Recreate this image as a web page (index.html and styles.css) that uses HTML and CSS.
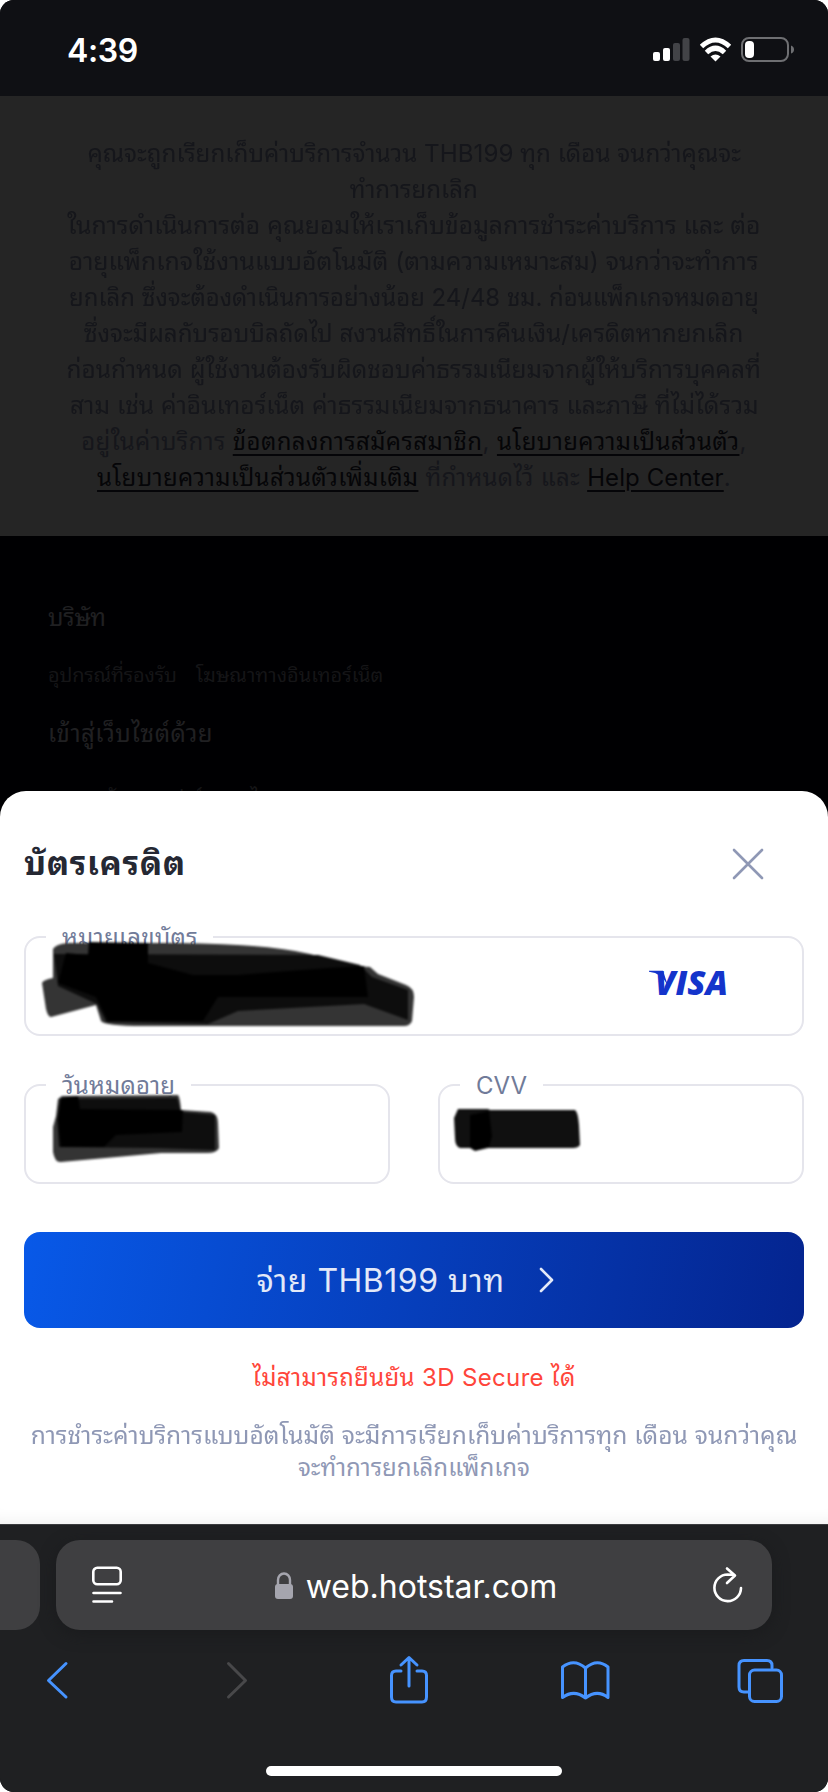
FILE: index.html
```html
<!DOCTYPE html>
<html lang="th">
<head>
<meta charset="utf-8">
<title>web.hotstar.com</title>
<link rel="stylesheet" href="styles.css">
</head>
<body>
<div class="phone">
  <header class="status">
    <span class="time">4:39</span>
    <svg class="status-icons" width="144" height="28" viewBox="0 0 144 28">
      <rect x="1" y="15" width="7" height="9" rx="2" fill="#fff"/>
      <rect x="11" y="11" width="7" height="13" rx="2" fill="#fff"/>
      <rect x="21" y="6" width="7" height="18" rx="2" fill="#424347"/>
      <rect x="30.500" y="1" width="7" height="23" rx="2" fill="#424347"/>
      <g fill="none" stroke="#fff" stroke-width="5"><path d="M49.500 9.500Q63.500-3.500 77.500 9.500"/><path d="M54.500 15.500Q63.500 7 72.500 15.500"/></g>
      <path d="M58.500 19.500Q63.500 15.500 68.500 19.500L63.500 24.500Z" fill="#fff"/>
      <rect x="90" y="1" width="46" height="23" rx="7" fill="none" stroke="#6e6f72" stroke-width="2"/>
      <rect x="93" y="4" width="9" height="17" rx="4" fill="#fff"/>
      <path d="M139 8.500q3 1 3 4t-3 4z" fill="#6e6f72"/>
    </svg>
  </header>
  <section class="terms">
    <p class="line l1">คุณจะถูกเรียกเก็บค่าบริการจำนวน THB199 ทุก เดือน จนกว่าคุณจะ</p>
    <p class="line l2">ทำการยกเลิก</p>
    <p class="line l3">ในการดำเนินการต่อ คุณยอมให้เราเก็บข้อมูลการชำระค่าบริการ และ ต่อ</p>
    <p class="line l4">อายุแพ็กเกจใช้งานแบบอัตโนมัติ (ตามความเหมาะสม) จนกว่าจะทำการ</p>
    <p class="line l5">ยกเลิก ซึ่งจะต้องดำเนินการอย่างน้อย 24/48 ชม. ก่อนแพ็กเกจหมดอายุ</p>
    <p class="line l6">ซึ่งจะมีผลกับรอบบิลถัดไป สงวนสิทธิ์ในการคืนเงิน/เครดิตหากยกเลิก</p>
    <p class="line l7">ก่อนกำหนด ผู้ใช้งานต้องรับผิดชอบค่าธรรมเนียมจากผู้ให้บริการบุคคลที่</p>
    <p class="line l8">สาม เช่น ค่าอินเทอร์เน็ต ค่าธรรมเนียมจากธนาคาร และภาษี ที่ไม่ได้รวม</p>
    <p class="line l9">อยู่ในค่าบริการ <a>ข้อตกลงการสมัครสมาชิก</a>, <a>นโยบายความเป็นส่วนตัว</a>,</p>
    <p class="line l10"><a>นโยบายความเป็นส่วนตัวเพิ่มเติม</a> ที่กำหนดไว้ และ <a class="latin">Help Center</a>.</p>
  </section>
  <section class="footer">
    <h3 class="foot-title">บริษัท</h3>
    <div class="foot-links"><span class="f1">อุปกรณ์ที่รองรับ</span><span class="f2">โฆษณาทางอินเทอร์เน็ต</span></div>
    <h3 class="foot-title second">เข้าสู่เว็บไซต์ด้วย</h3>
    <div class="foot-langs">ภาษาอังกฤษ ฟาร์ ภาษาไทย</div>
  </section>
  <main class="sheet">
    <div class="sheet-head">
      <h1 class="title">บัตรเครดิต</h1>
      <svg width="32" height="32" viewBox="0 0 32 32"><path d="M2 2L30 30M30 2L2 30" stroke="#8f98b5" stroke-width="2.600" stroke-linecap="round"/></svg>
    </div>
    <div class="fields">
      <div class="field wide">
        <span class="label lcard">หมายเลขบัตร</span>
        <svg class="visa" width="84" height="48" viewBox="0 -10 84 48"><path d="M0 1.800H14L19 17Q13 4 0 2.800Z" fill="#1434cb"/><text x="6" y="26" textLength="73" lengthAdjust="spacingAndGlyphs">VISA</text></svg>
        <svg class="scribble s1" width="380" height="100" viewBox="0 0 380 100">
          <path d="M15 12Q18 7 30 6L140 6Q230 7 272 17L318 29L332 30L340 37L368 48Q376 51 376 60L374 84Q372 89 366 89L105 89Q67 89 63 84L58 68L13 80Q10 80 8 72L4 46Q5 43 15 41Z" fill="#343434"/>
          <path d="M16 17L280 18L322 28L334 40L370 53V83L326 67L200 74L170 87L68 85L59 67L20 49Z" fill="#0d0d0d"/>
          <path d="M51 5L110 6V26L155 38H200L290 31L326 29L330 60L180 60L165 84H70L58 60L20 46L28 16L50 18Z" fill="#000"/>
        </svg>
      </div>
      <div class="row">
        <div class="field">
          <span class="label lexp">วันหมดอายุ</span>
          <svg class="scribble s2" width="200" height="90" viewBox="0 0 200 90">
            <path d="M26 10L142 9Q144 11 145 24L175 26Q182 28 182 37L183 62Q181 67 171 67L125 67L25 76Q19 77 17 66L17 41L20 30L22 13Z" fill="#343434"/>
            <path d="M24 13L141 12L145 26L179 29V64L120 62L23 61L21 33Z" fill="#0e0e0e"/>
            <path d="M25 12L42 10L44 23L147 24L146 46L80 49L68 61L25 61L22 34Z" fill="#000"/>
          </svg>
        </div>
        <div class="field">
          <span class="label lcvv">CVV</span>
          <svg class="scribble s3" width="150" height="70" viewBox="0 0 150 70">
            <path d="M18 13L48 13L50 14L135 14Q138 16 139 29L140 49Q138 52 133 52L48 52L35 55L30 52L20 52Q15 50 15 42L14 22Z" fill="#101010"/>
            <path d="M30 19L49 15L52 40L49 51L35 54L30 50Z" fill="#000"/>
          </svg>
        </div>
      </div>
    </div>
    <div class="pay"><span class="pay-text">จ่าย THB199 บาท</span><svg width="16" height="28" viewBox="0 0 16 28"><path d="M2 3L13 14L2 25" fill="none" stroke="#e3e9f8" stroke-width="2.600" stroke-linecap="round" stroke-linejoin="round"/></svg></div>
    <p class="error">ไม่สามารถยืนยัน 3D Secure ได้</p>
    <p class="note n1">การชำระค่าบริการแบบอัตโนมัติ จะมีการเรียกเก็บค่าบริการทุก เดือน จนกว่าคุณ</p>
    <p class="note n2">จะทำการยกเลิกแพ็กเกจ</p>
  </main>
  <footer class="browser">
    <div class="tabs">
      <div class="prev-tab"></div>
      <div class="url">
        <svg width="32" height="38" viewBox="0 0 32 38" fill="none" stroke="#fff" stroke-width="2.600" stroke-linecap="round"><rect x="1.300" y="1.800" width="27.400" height="16.400" rx="4"/><path d="M1.500 27H28.500M1.500 35.500H20"/></svg>
        <div class="address">
          <svg width="20" height="28" viewBox="0 0 20 28"><path d="M4 13V8a6 6.500 0 0 1 12 0v5" fill="none" stroke="#a5a5ae" stroke-width="2.400"/><rect x="1" y="12" width="18" height="15" rx="3" fill="#a5a5ae"/></svg>
          <span class="host">web.hotstar.com</span>
        </div>
        <svg width="32" height="38" viewBox="0 0 32 38" fill="none" stroke="#fff" stroke-width="2.600" stroke-linecap="round" stroke-linejoin="round"><path d="M29 22A13.300 13.300 0 1 1 15.700 8.500L22.500 9M15 2.500L23 9.500L15 17"/></svg>
      </div>
    </div>
    <nav class="tools">
      <svg width="50" height="50" viewBox="0 0 50 50"><path d="M20 8.500L2.500 25.500L20 42" class="ic"/></svg>
      <svg width="50" height="50" viewBox="0 0 50 50"><path d="M2.500 8.500L19.500 25.500L2.500 42" class="ic off"/></svg>
      <svg width="50" height="50" viewBox="0 0 50 50"><path d="M12 16H7Q2.500 16 2.500 20.500V42Q2.500 47 7 47H33Q37.500 47 37.500 42V20.500Q37.500 16 33 16H28M20 31V3M12 10L20 2.500L28 10" class="ic"/></svg>
      <svg width="50" height="50" viewBox="0 0 50 50"><path d="M25.500 43V13Q14 3 2.500 12V42.500Q14 34 25.500 43Q37 34 48 42.500V12Q37 3 25.500 13" class="ic"/></svg>
      <svg width="50" height="50" viewBox="0 0 50 50"><path d="M36 13V10.500Q36 5.500 31 5.500H8Q3 5.500 3 10.500V32Q3 37 8 37H13" class="ic"/><rect x="13.500" y="15" width="32" height="31.500" rx="5" class="ic"/></svg>
    </nav>
    <div class="home"></div>
  </footer>
</div>
</body>
</html>
```
FILE: styles.css
```css
* { box-sizing: border-box; }
body { margin: 0; background: #fff; font-family: Inter, "Noto Sans Thai Looped", "Noto Sans Thai", "Noto Sans", sans-serif; }
p, h1, h3 { margin: 0; font-weight: 400; }
svg { display: block; flex: none; }
.phone { width: 828px; height: 1792px; display: flex; flex-direction: column; border-radius: 14px; overflow: hidden; background: #000002; position: relative; }
.status { height: 96px; flex: none; background: #0f1014; display: flex; justify-content: space-between; align-items: center; padding: 5px 32px 0 67px; }
.time { color: #fff; font-size: 32px; font-weight: 600; letter-spacing: -0.4px; }
.terms { height: 440px; flex: none; background: #252525; color: #15161b; padding-top: 40px; display: flex; flex-direction: column; align-items: center; }
.line { height: 36px; line-height: 36px; font-size: 24px; white-space: nowrap; }
.l1 { transform: scaleX(1.008); }
.l2 { transform: scaleX(1.005); }
.l3 { transform: scaleX(1.032); }
.l4 { transform: scaleX(1.034); }
.l5 { transform: scaleX(0.997); }
.l6 { transform: scaleX(1.007); }
.l7 { transform: scaleX(1.016); }
.l8 { transform: scaleX(1.024); }
.l9 { letter-spacing: 0.4px; }
.l10 { letter-spacing: 0.32px; }
.line a { color: #050508; text-decoration: underline; text-decoration-thickness: 2px; text-underline-offset: 4px; }
.line .latin { letter-spacing: 0.1px; }
.footer { height: 255px; flex: none; padding: 62px 48px 0; color: #1c1c1f; overflow: hidden; white-space: nowrap; }
.foot-title { height: 40px; line-height: 40px; font-size: 24px; color: #202022; letter-spacing: -0.3px; }
.foot-links { margin-top: 19px; height: 36px; line-height: 36px; font-size: 20px; color: #151517; display: flex; gap: 19px; }
.f1 { letter-spacing: -0.2px; }
.foot-title.second { margin-top: 21px; letter-spacing: 0.5px; }
.foot-langs { margin-top: 25px; padding-left: 14px; height: 36px; line-height: 36px; font-size: 20px; color: #151517; }
.sheet { height: 733px; flex: none; background: #fff; border-radius: 26px 26px 0 0; padding: 47px 24px 0; box-shadow: inset 0 -16px 16px -14px #eee; }
.sheet-head { display: flex; justify-content: space-between; align-items: center; height: 52px; padding-right: 40px; }
.title { font-size: 33px; font-weight: 700; color: #252833; white-space: nowrap; letter-spacing: 0.7px; margin-top: -7px; }
.fields { margin-top: 46px; display: flex; flex-direction: column; gap: 48px; }
.row { display: grid; grid-template-columns: 366px 366px; gap: 48px; }
.field { height: 100px; border: 2px solid #e5e5ec; border-radius: 16px; position: relative; }
.label { position: absolute; left: 20px; top: -16px; height: 32px; line-height: 32px; padding: 0 16px; background: #fff; color: #717b99; font-size: 24px; white-space: nowrap; }
.lcard { width: 167px; letter-spacing: 0.25px; }
.lexp { width: 145px; letter-spacing: 0.2px; }
.lcvv { width: 83px; }
.visa { position: absolute; right: 69px; top: 21px; }
.visa text { font: italic 800 34px "Open Sans", sans-serif; fill: #1434cb; }
.scribble { position: absolute; filter: blur(1.200px); overflow: visible; }
.s1 { left: 12px; top: -1px; }
.s2 { left: 10px; top: 0; }
.s3 { left: 0; top: 10px; }
.pay { margin-top: 48px; height: 96px; border-radius: 16px; background: linear-gradient(100deg, #0859e8, #04248f); color: #e3e9f8; display: flex; align-items: center; justify-content: center; gap: 34px; padding: 0 17px 0 0; }
.pay-text { font-size: 32px; white-space: nowrap; letter-spacing: 0.5px; margin-top: -5px; }
.error { margin-top: 33px; height: 34px; line-height: 34px; font-size: 24px; color: #ff453a; text-align: center; white-space: nowrap; letter-spacing: 0.35px; }
.note { height: 32px; line-height: 32px; font-size: 24px; color: #8f98b5; white-space: nowrap; display: flex; justify-content: center; }
.n1 { margin-top: 25px; transform: scaleX(1.024); }
.browser { height: 268px; flex: none; background: #1f2022; border-top: 1px solid #3b3c3f; padding-top: 15px; display: flex; flex-direction: column; align-items: center; }
.tabs { width: 828px; display: flex; gap: 16px; }
.prev-tab { width: 40px; height: 90px; background: #3f3f41; border-radius: 0 24px 24px 0; }
.url { width: 716px; height: 90px; background: #3f3f41; border-radius: 24px; display: flex; align-items: center; justify-content: space-between; padding: 0 28px 0 36px; box-shadow: 0 4px 16px #1a1b1d; }
.address { display: flex; align-items: center; gap: 12px; padding: 2px 5px 0 0; }
.host { color: #fff; font-size: 32px; }
.tools { width: 828px; height: 50px; margin-top: 25px; padding: 0 36px 0 46px; display: grid; grid-template-columns: 180px 163px 171px 176px 50px; }
.ic { fill: none; stroke: #4693ff; stroke-width: 3; stroke-linecap: round; stroke-linejoin: round; }
.off { stroke: #48484a; }
.home { margin-top: 61px; width: 296px; height: 10px; border-radius: 5px; background: #fff; }
```
